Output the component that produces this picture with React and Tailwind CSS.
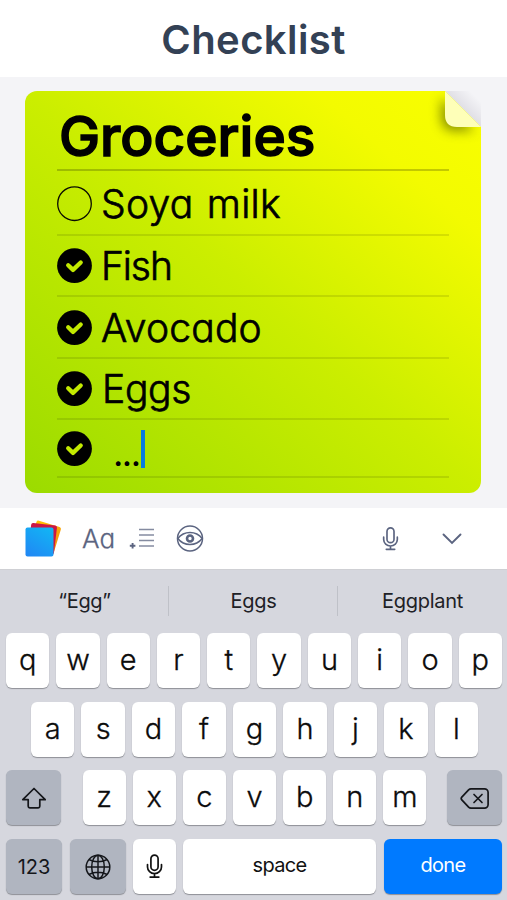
import React from 'react';

const items = [
  { text: 'Soya milk', done: false, row: 'h-[65px] pt-[3px]', label: 'tracking-[0.3px] pl-[8px] [word-spacing:2px]' },
  { text: 'Fish', done: true, row: 'h-[61px] pt-[1px]', label: 'tracking-[-1.1px] pl-[8px]' },
  { text: 'Avocado', done: true, row: 'h-[62px] pt-[1px]', label: 'tracking-[0.2px] pl-[8px]' },
  { text: 'Eggs', done: true, row: 'h-[61px] pt-[1px]', label: 'tracking-[-0.3px] pl-[9px]' },
];

function Check({ done }) {
  return (
    <svg className="block h-[36px] w-[36px] shrink-0" viewBox="0 0 36 36" fill="none">
      {done ? (
        <>
          <circle cx="17.500" cy="17.700" r="17.4" fill="#000" />
          <path d="M11.200 17.300l4.800 4.600 7.700-7.400" stroke="#c3ea00" strokeWidth="4.300" strokeLinecap="round" strokeLinejoin="round" />
        </>
      ) : (
        <circle cx="17.500" cy="17.700" r="16.800" stroke="#0a0c00" strokeWidth="1.3" />
      )}
    </svg>
  );
}

function Key({ children, className = '' }) {
  return (
    <div className={'flex h-[55px] items-center justify-center rounded-[6px] shadow-[0_1px_1px_#8e9096] ' + className}>
      {children}
    </div>
  );
}

function Letters({ chars, className }) {
  return (
    <div className={'grid gap-[7px] ' + className}>
      {chars.split('').map((c) => (
        <Key key={c} className="bg-white text-[29px] font-light leading-none text-[#0b0b0b]">
          <span className="-translate-y-[1px] [-webkit-text-stroke:0.3px_#0b0b0b]">{c}</span>
        </Key>
      ))}
    </div>
  );
}

function Mic({ className }) {
  return (
    <svg className={className} viewBox="0 0 18 26" fill="none" stroke="currentColor" strokeWidth="1.800" strokeLinecap="round">
      <rect x="5.2" y="1" width="7.6" height="16" rx="3.8" />
      <path d="M1.6 11v2.6a7.4 7 0 0 0 14.8 0V11M9 20.8V24M4.4 24.2h9.2" />
    </svg>
  );
}

export default function App() {
  return (
    <div className="flex h-[900px] w-[507px] flex-col overflow-hidden bg-white font-['Inter','Liberation_Sans',sans-serif]">
      <header className="flex h-[77px] items-center justify-center pt-[3px]">
        <h1 className="text-[40px] font-semibold leading-none tracking-[0.4px] text-[#334155]">Checklist</h1>
      </header>

      <main className="h-[431px] bg-[#f4f4f7] px-[25px] pt-[14px]">
        <section className="relative h-[402px] w-[456px] overflow-hidden rounded-[12px] rounded-tr-none bg-[linear-gradient(to_top_right,#9bdb00_0%,#cbee00_50%,#f3fb00_82%,#faff00_100%)] px-[32px] text-black">
          <div className="flex h-[80px] items-start border-b-2 border-black/20">
            <h2 className="mt-[17px] pl-[2px] text-[55px] font-medium leading-[56px] tracking-[0px] [-webkit-text-stroke:1.5px_black]">Groceries</h2>
          </div>
          {items.map((it) => (
            <div key={it.text} className={'flex items-center border-b-2 border-black/10 ' + it.row}>
              <Check done={it.done} />
              <span className={'-mt-[1px] text-[39px] font-light leading-none [-webkit-text-stroke:0.7px_black] [font-feature-settings:"cv11"] ' + it.label}>{it.text}</span>
            </div>
          ))}
          <div className="flex h-[58px] items-center border-b-2 border-black/10 pt-[2px]">
            <Check done />
            <div className="ml-[20px] flex h-[38px] w-[24px] items-end pb-[2px]">
              <span className="text-[36px] leading-[26px] tracking-[-1.5px]">...</span>
            </div>
            <span className="ml-[4px] h-[38px] w-[4px] bg-[#087be0]" />
          </div>
          <svg className="absolute right-0 top-0 h-[60px] w-[60px] overflow-visible" viewBox="0 0 60 60">
            <defs>
              <filter id="soft" x="-60%" y="-60%" width="220%" height="220%">
                <feGaussianBlur stdDeviation="6" />
              </filter>
              <linearGradient id="under" x1="0" y1="1" x2="1" y2="0">
                <stop offset="0.5" stopColor="#e0dfe5" />
                <stop offset="0.85" stopColor="#f4f4f7" />
              </linearGradient>
            </defs>
            <path d="M20 6v20q0 14 14 14h20z" fill="#6e7800" opacity=".8" filter="url(#soft)" />
            <path d="M24 0h36v36z" fill="url(#under)" />
            <path d="M24 0v24q0 12 12 12h24z" fill="#feffb8" />
          </svg>
        </section>
      </main>

      <div className="flex h-[61px] items-center pl-[24px] text-[#5b6480]">
        <svg className="block h-[40px] w-[40px]" viewBox="0 0 40 40">
          <defs>
            <linearGradient id="blue" x1="0.8" y1="0" x2="0.2" y2="1">
              <stop offset="0" stopColor="#12b4f4" />
              <stop offset="1" stopColor="#2089f4" />
            </linearGradient>
            <linearGradient id="gold" x1="0" y1="0" x2="1" y2="1">
              <stop offset="0" stopColor="#ffc400" />
              <stop offset="1" stopColor="#f68a10" />
            </linearGradient>
          </defs>
          <rect x="8.5" y="4.500" width="25.500" height="28" rx="2" fill="url(#gold)" transform="rotate(17 22 18)" />
          <rect x="5.500" y="5.2" width="26" height="29" rx="2" fill="#cb1745" transform="rotate(7 19 20)" />
          <rect x="1.5" y="8.500" width="28" height="29" rx="2" fill="url(#blue)" />
        </svg>
        <span className="ml-[18px] w-[34px] text-[26px] font-light leading-none [-webkit-text-stroke:0.3px_#5b6480] [font-feature-settings:'cv11']">Aa</span>
        <svg className="ml-[13px] block h-[24px] w-[26px]" viewBox="0 0 26 24" stroke="currentColor" fill="none">
          <path d="M10 2.5h15M10 8h15M10 13.500h15M10 19h15" strokeWidth="1.5" opacity=".75" />
          <path d="M.8 18.800h5.6M3.6 16v5.6" strokeWidth="1.9" />
        </svg>
        <svg className="ml-[21px] block h-[28px] w-[28px]" viewBox="0 0 28 28" fill="none" stroke="currentColor" strokeWidth="1.500">
          <circle cx="14" cy="13.500" r="12.5" />
          <path d="M1.8 13.500C8 5.500 20 5.500 26.2 13.500 20 21.500 8 21.500 1.8 13.500z" />
          <circle cx="14" cy="13.500" r="3" strokeWidth="2.600" />
        </svg>
        <Mic className="ml-[178px] block h-[24px] w-[17px]" />
        <svg className="ml-[43px] block h-[12px] w-[20px]" viewBox="0 0 20 12" fill="none" stroke="currentColor" strokeWidth="1.9" strokeLinecap="round">
          <path d="M1.5 1.5l8.5 8.5 8.5-8.5" />
        </svg>
      </div>

      <div className="flex h-[331px] flex-col border-t border-[#cfd0d4] bg-[#d6d7de] px-[6px]">
        <div className="-mx-[6px] flex h-[63px] items-center pb-[1px] text-center text-[20px] leading-none tracking-[-0.3px] text-[#202126]">
          <span className="flex h-[30px] w-[168px] items-center justify-center pl-[1px]">“Egg”</span>
          <span className="flex h-[30px] w-[170px] items-center justify-center border-x border-[#bfc1c8] pl-[1px]">Eggs</span>
          <span className="flex h-[30px] w-[169px] items-center justify-center">Eggplant</span>
        </div>

        <Letters chars="qwertyuiop" className="w-[496px] grid-cols-10" />
        <Letters chars="asdfghjkl" className="ml-[25px] mt-[14px] w-[447px] grid-cols-9" />

        <div className="mt-[13px] flex w-[496px]">
          <Key className="w-[55px] bg-[#b0b5c0] text-[#14161a]">
            <svg className="h-[24px] w-[28px]" viewBox="0 0 28 24" fill="none" stroke="currentColor" strokeWidth="1.7" strokeLinejoin="round">
              <path d="M14 2.500L2.8 13.7h5.4v6.6q0 1.6 1.6 1.6h8.4q1.6 0 1.6-1.6v-6.6h5.4z" />
            </svg>
          </Key>
          <Letters chars="zxcvbnm" className="ml-[21.5px] w-[344px] grid-cols-7" />
          <Key className="ml-auto w-[55px] bg-[#b0b5c0] text-[#14161a]">
            <svg className="h-[24px] w-[30px]" viewBox="0 0 30 24" fill="none" stroke="currentColor" strokeWidth="1.7" strokeLinecap="round" strokeLinejoin="round">
              <path d="M11 2.8h13.5a3.6 3.6 0 0 1 3.6 3.6v12.2a3.6 3.6 0 0 1-3.6 3.6H11q-1.4 0-2.4-1L1.8 13.800q-1.2-1.3 0-2.6L8.6 3.800q1-1 2.4-1z" />
              <path d="M14 8.500l8 8M22 8.500l-8 8" />
            </svg>
          </Key>
        </div>

        <div className="mt-[14px] flex w-[496px] text-[20px] leading-none">
          <Key className="w-[56px] bg-[#b0b5c0] text-[#14161a]">123</Key>
          <Key className="ml-[8px] w-[56px] bg-[#b0b5c0] text-[#14161a]">
            <svg className="h-[28px] w-[28px]" viewBox="0 0 28 28" fill="none" stroke="currentColor" strokeWidth="1.5">
              <circle cx="14" cy="14" r="11.800" />
              <ellipse cx="14" cy="14" rx="6.3" ry="11.800" />
              <path d="M14 2v24M2 14h24M4.800 6.500Q14 11 23.200 6.500M4.800 21.500Q14 17 23.200 21.500" />
            </svg>
          </Key>
          <Key className="ml-[7px] w-[43px] bg-white text-[#111]">
            <Mic className="h-[25px] w-[17px]" />
          </Key>
          <Key className="ml-[7px] w-[193px] bg-white pb-[3px] tracking-[-0.7px] text-[#111]">space</Key>
          <Key className="ml-[8px] w-[118px] bg-[#007aff] pb-[3px] tracking-[-0.7px] text-white">done</Key>
        </div>
      </div>
    </div>
  );
}
